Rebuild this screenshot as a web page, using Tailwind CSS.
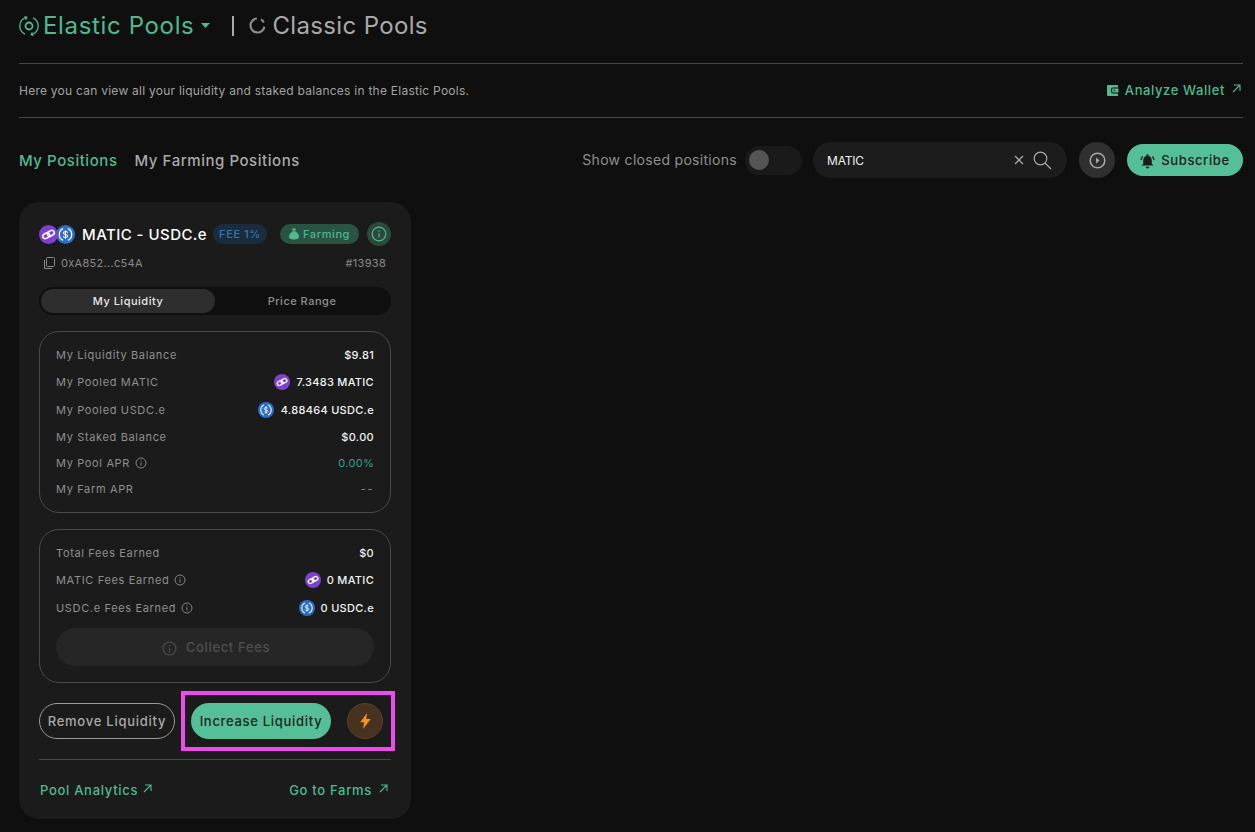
<!DOCTYPE html>
<html lang="en">
<head>
    <meta charset="UTF-8">
    <meta name="viewport" content="width=device-width, initial-scale=1.0">
    <title>Elastic Pools</title>
    <script src="https://cdn.jsdelivr.net/npm/@tailwindcss/browser@4"></script>
</head>
<body class="bg-[#0f0f0f] h-[832px] overflow-hidden font-['Inter',sans-serif] text-[#a9a9a9]">
    <div class="pl-[19px] pr-3">
        <!-- Pool type switch -->
        <div class="h-[63px] pb-[12px] flex items-center">
            <svg class="w-5 h-5 text-[#50b98f]" viewBox="0 0 20 20" fill="none" stroke="currentColor" stroke-width="1.300">
                <path d="M6 18.200A9 9 0 0 1 7.400 1.400M14 1.800A9 9 0 0 1 12.600 18.600"/>
                <path d="M5.400.5l2.400.9-1.200 2.300M14.600 19.500l-2.400-.9 1.200-2.300"/>
                <circle cx="10" cy="10" r="3.500" stroke-width="1.800"/>
            </svg>
            <span class="ml-[4px] text-[24px] leading-none font-normal tracking-[0.65px] text-[#50b98f]">Elastic Pools</span>
            <svg class="ml-[7px] w-[9px] h-[5px] text-[#50b98f]" viewBox="0 0 9 5" fill="currentColor"><path d="M0 0h9L4.500 5z"/></svg>
            <span class="ml-[22px] w-[2px] h-[20px] bg-[#a9a9a9]"></span>
            <svg class="ml-[15px] w-[17px] h-[17px] text-[#8c8c8c]" viewBox="0 0 17 17" fill="none" stroke="currentColor" stroke-width="2.200"><path d="M15.400 9.700A7 7 0 1 1 7.900 1.500M12 2.400A7 7 0 0 1 14.800 5.500"/></svg>
            <span class="ml-[6px] text-[24px] leading-none font-normal tracking-[0.35px] text-[#a9a9a9]">Classic Pools</span>
        </div>

        <!-- Intro line -->
        <div class="h-[55px] border-y border-[#474747] flex items-center justify-between">
            <span class="text-[12px] tracking-[0.25px] text-[#a3a3a3]">Here you can view all your liquidity and staked balances in the Elastic Pools.</span>
            <a class="flex items-center text-[13px] font-medium tracking-[0.6px] text-[#50b98f] mr-[2px]">
                <svg class="w-[13px] h-[13px] mr-[6px]" viewBox="0 0 13 13" fill="currentColor"><path fill-rule="evenodd" d="M2 1h10v2.500H7a2 2 0 0 0-2 2v2a2 2 0 0 0 2 2h5V12H2a1 1 0 0 1-1-1V2a1 1 0 0 1 1-1zm5 3.500h5.500v4H7a1 1 0 0 1-1-1v-2a1 1 0 0 1 1-1zm1.200 1.200a.8.8 0 1 0 0 1.600.8.8 0 0 0 0-1.600z"/></svg>
                Analyze Wallet
                <svg class="w-[9px] h-[9px] ml-[7px] mb-[5px]" viewBox="0 0 9 9" fill="none" stroke="currentColor" stroke-width="1.100"><path d="M1 8L8 1M2 1h6v6"/></svg>
            </a>
        </div>

        <!-- Tabs and filters -->
        <div class="mt-[23px] h-[38px] flex items-center justify-between">
            <div class="flex items-center gap-[17px] pt-[2px] text-[15px] font-medium tracking-[0.55px]">
                <span class="text-[#50b98f]">My Positions</span>
                <span class="text-[#a9a9a9]">My Farming Positions</span>
            </div>
            <div class="flex items-center">
                <span class="pb-[2px] text-[14px] tracking-[0.3px] text-[#8f8f8f]">Show closed positions</span>
                <div class="ml-2 w-[57px] h-[29px] rounded-full bg-[#1a1a1a] flex items-center pl-[4px]">
                    <span class="w-[20px] h-[20px] rounded-full bg-[#555555]"></span>
                </div>
                <div class="ml-[11px] w-[254px] h-[36px] rounded-full bg-[#1c1c1c] flex items-center pl-[14px] pr-[15px]">
                    <span class="pt-[2px] text-[12px] tracking-[-0.2px] text-[#f0f0f0]">MATIC</span>
                    <svg class="ml-auto w-[10px] h-[10px] text-[#a9a9a9]" viewBox="0 0 10 10" stroke="currentColor" stroke-width="1.300"><path d="M1 1l8 8M9 1L1 9"/></svg>
                    <svg class="ml-[9px] w-[19px] h-[19px] text-[#a9a9a9]" viewBox="0 0 19 19" fill="none" stroke="currentColor" stroke-width="1.200"><circle cx="7.500" cy="7.500" r="6.300"/><path d="M12 12l6 6"/></svg>
                </div>
                <div class="ml-[12px] w-[36px] h-[36px] rounded-full bg-[#303030] flex items-center justify-center">
                    <svg class="w-[17px] h-[17px] text-[#a9a9a9]" viewBox="0 0 17 17" fill="none" stroke="currentColor" stroke-width="1.500"><circle cx="8.500" cy="8.500" r="7.300"/><path d="M7 5.500l3.500 3-3.500 3z" fill="currentColor" stroke="none"/></svg>
                </div>
                <button class="ml-[12px] w-[116px] h-[32px] pt-[2px] rounded-full bg-[#55bf97] flex items-center justify-center text-[13px] font-medium tracking-[0.6px] text-[#1c1c1c]">
                    <svg class="w-[15px] h-[15px] mr-[6px]" viewBox="0 0 14 14" fill="currentColor"><path d="M7 .2c.6 0 1 .4 1 1v.6c1.900.5 3 2 3 4.200v3l1.600 1.800H1.400L3 9V6c0-2.200 1.100-3.700 3-4.200v-.6c0-.6.400-1 1-1zM5.300 11.800h3.400a1.700 1.700 0 0 1-3.400 0z"/><path d="M.8 5.500L2.300 2.200M13.200 5.500L11.700 2.200" stroke="currentColor" stroke-width="1.200" fill="none"/></svg>
                    Subscribe
                </button>
            </div>
        </div>

        <!-- Position card -->
        <div class="mt-[23px] w-[392px] h-[617px] rounded-[20px] bg-[#1b1b1b] px-[20px] pt-[20px]">
            <div class="h-[24px] flex items-center">
                <div class="flex items-center">
                    <svg class="w-[19px] h-[19px] relative z-10" viewBox="0 0 20 20"><circle cx="10" cy="10" r="10" fill="#7f3fd0"/><g fill="none" stroke="#fff" stroke-width="1.700" transform="rotate(-28 10 10)"><rect x="3.500" y="7.500" width="7.500" height="5" rx="2.500"/><rect x="9" y="7.500" width="7.500" height="5" rx="2.500"/></g></svg>
                    <svg class="w-[19px] h-[19px] -ml-[2px]" viewBox="0 0 20 20"><circle cx="10" cy="10" r="10" fill="#2c6dc9"/><path d="M7.500 3.800A6.800 6.800 0 0 0 7.500 16.200M12.500 3.800A6.800 6.800 0 0 1 12.500 16.200" fill="none" stroke="#fff" stroke-width="1.300"/><path d="M12.200 8c-.3-.8-1.100-1.200-2.200-1.200-1.300 0-2.200.6-2.200 1.600 0 2.200 4.500 1 4.500 3.200 0 1-1 1.600-2.300 1.600-1.200 0-2-.5-2.300-1.300M10 5.500v9" fill="none" stroke="#fff" stroke-width="1.100"/></svg>
                </div>
                <span class="ml-[7px] w-[126px] pt-[2px] text-[15px] font-medium tracking-[0.45px] text-white whitespace-nowrap">MATIC - USDC.e</span>
                <span class="ml-[5px] w-[54px] h-[20px] rounded-full bg-[#1b2c3c] flex items-center justify-center text-[11px] font-medium tracking-[0.6px] text-[#2f78b8] whitespace-nowrap">FEE 1%</span>
                <span class="ml-[13px] w-[79px] h-[20px] rounded-full bg-[#2a5442] flex items-center justify-center text-[11px] font-medium tracking-[0.6px] text-[#52b78f]">
                    <svg class="w-[10px] h-[12px] mr-[4px]" viewBox="0 0 10 11" fill="currentColor"><path d="M3 0h4L6.200 2.200H3.800zM3.500 2.800h3C8.500 4.300 10 6 10 8c0 2-1.500 3-5 3S0 10 0 8c0-2 1.500-3.700 3.500-5.200z"/></svg>
                    Farming
                </span>
                <span class="ml-[8px] w-[24px] h-[24px] rounded-full bg-[#2a4a3c] flex items-center justify-center">
                    <svg class="w-[16px] h-[16px] text-[#52b78f]" viewBox="0 0 16 16" fill="none" stroke="currentColor" stroke-width="1.200"><circle cx="8" cy="8" r="6.800"/><path d="M8 7.300v4M8 4.500v1.300"/></svg>
                </span>
            </div>

            <div class="mt-[9px] h-[16px] flex items-center justify-between pl-[5px] pr-[5px] text-[11px] tracking-[0.3px] text-[#8a8a8a]">
                <span class="flex items-center gap-[6px]">
                    <svg class="w-[11px] h-[12px]" viewBox="0 0 11 12" fill="none" stroke="currentColor" stroke-width="1"><path d="M.5 3v8.500H8"/><rect x="2.500" y=".5" width="8" height="9" rx="1"/></svg>
                    0xA852...c54A
                </span>
                <span>#13938</span>
            </div>

            <!-- Liquidity / range toggle -->
            <div class="mt-[16px] h-[28px] rounded-full bg-[#0f0f0f] flex items-center p-[2px] text-[11px] font-medium tracking-[0.5px]">
                <span class="w-[174px] h-[24px] rounded-full bg-[#2e2e2e] flex items-center justify-center text-[#e6e6e6]">My Liquidity</span>
                <span class="flex-1 flex items-center justify-center text-[#8f8f8f]">Price Range</span>
            </div>

            <!-- Balances -->
            <div class="mt-[16px] h-[182px] rounded-[20px] border border-[#4a4a4a] px-[16px] pt-[10px] text-[11px] tracking-[0.65px] text-[#8f8f8f]">
                <div class="h-[26px] flex items-center justify-between"><span>My Liquidity Balance</span><span class="font-medium tracking-[0.3px] text-[#f2f2f2]">$9.81</span></div>
                <div class="h-[28px] flex items-center justify-between">
                    <span>My Pooled MATIC</span>
                    <span class="flex items-center font-medium tracking-[0.3px] text-[#f2f2f2]">
                        <svg class="w-4 h-4 mr-[6px]" viewBox="0 0 20 20"><circle cx="10" cy="10" r="10" fill="#7f3fd0"/><g fill="none" stroke="#fff" stroke-width="1.700" transform="rotate(-28 10 10)"><rect x="3.500" y="7.500" width="7.500" height="5" rx="2.500"/><rect x="9" y="7.500" width="7.500" height="5" rx="2.500"/></g></svg>
                        7.3483 MATIC
                    </span>
                </div>
                <div class="h-[28px] flex items-center justify-between">
                    <span>My Pooled USDC.e</span>
                    <span class="flex items-center font-medium tracking-[0.3px] text-[#f2f2f2]">
                        <svg class="w-4 h-4 mr-[7px]" viewBox="0 0 20 20"><circle cx="10" cy="10" r="10" fill="#2c6dc9"/><path d="M7.500 3.800A6.800 6.800 0 0 0 7.500 16.200M12.500 3.800A6.800 6.800 0 0 1 12.500 16.200" fill="none" stroke="#fff" stroke-width="1.300"/><path d="M12.200 8c-.3-.8-1.100-1.200-2.200-1.200-1.300 0-2.200.6-2.200 1.600 0 2.200 4.500 1 4.500 3.200 0 1-1 1.600-2.300 1.600-1.200 0-2-.5-2.300-1.300M10 5.500v9" fill="none" stroke="#fff" stroke-width="1.100"/></svg>
                        4.88464 USDC.e
                    </span>
                </div>
                <div class="h-[26px] flex items-center justify-between"><span>My Staked Balance</span><span class="font-medium tracking-[0.3px] text-[#f2f2f2]">$0.00</span></div>
                <div class="h-[26px] flex items-center justify-between">
                    <span class="flex items-center gap-[5px]">My Pool APR
                        <svg class="w-[12px] h-[12px]" viewBox="0 0 12 12" fill="none" stroke="currentColor" stroke-width=".9"><circle cx="6" cy="6" r="5"/><path d="M6 5.400v3.200M6 3.300v1"/></svg>
                    </span>
                    <span class="tracking-[0.3px] text-[#39a08d]">0.00%</span>
                </div>
                <div class="h-[26px] flex items-center justify-between"><span>My Farm APR</span><span class="tracking-[1.500px] font-medium text-[#39a08d]">--</span></div>
            </div>

            <!-- Fees -->
            <div class="mt-[16px] h-[154px] rounded-[20px] border border-[#4a4a4a] px-[16px] pt-[10px] text-[11px] tracking-[0.65px] text-[#8f8f8f]">
                <div class="h-[26px] flex items-center justify-between"><span>Total Fees Earned</span><span class="font-medium tracking-[0.3px] text-[#f2f2f2]">$0</span></div>
                <div class="h-[28px] flex items-center justify-between">
                    <span class="flex items-center gap-[5px]">MATIC Fees Earned
                        <svg class="w-[12px] h-[12px]" viewBox="0 0 12 12" fill="none" stroke="currentColor" stroke-width=".9"><circle cx="6" cy="6" r="5"/><path d="M6 5.400v3.200M6 3.300v1"/></svg>
                    </span>
                    <span class="flex items-center font-medium tracking-[0.3px] text-[#f2f2f2]">
                        <svg class="w-4 h-4 mr-[6px]" viewBox="0 0 20 20"><circle cx="10" cy="10" r="10" fill="#7f3fd0"/><g fill="none" stroke="#fff" stroke-width="1.700" transform="rotate(-28 10 10)"><rect x="3.500" y="7.500" width="7.500" height="5" rx="2.500"/><rect x="9" y="7.500" width="7.500" height="5" rx="2.500"/></g></svg>
                        0 MATIC
                    </span>
                </div>
                <div class="h-[28px] flex items-center justify-between">
                    <span class="flex items-center gap-[5px]">USDC.e Fees Earned
                        <svg class="w-[12px] h-[12px]" viewBox="0 0 12 12" fill="none" stroke="currentColor" stroke-width=".9"><circle cx="6" cy="6" r="5"/><path d="M6 5.400v3.200M6 3.300v1"/></svg>
                    </span>
                    <span class="flex items-center font-medium tracking-[0.3px] text-[#f2f2f2]">
                        <svg class="w-4 h-4 mr-[6px]" viewBox="0 0 20 20"><circle cx="10" cy="10" r="10" fill="#2c6dc9"/><path d="M7.500 3.800A6.800 6.800 0 0 0 7.500 16.200M12.500 3.800A6.800 6.800 0 0 1 12.500 16.200" fill="none" stroke="#fff" stroke-width="1.300"/><path d="M12.200 8c-.3-.8-1.100-1.200-2.200-1.200-1.300 0-2.200.6-2.200 1.600 0 2.200 4.500 1 4.500 3.200 0 1-1 1.600-2.300 1.600-1.200 0-2-.5-2.300-1.300M10 5.500v9" fill="none" stroke="#fff" stroke-width="1.100"/></svg>
                        0 USDC.e
                    </span>
                </div>
                <button class="mt-[6px] w-full h-[38px] pt-[2px] pl-[2px] rounded-full bg-[#262626] flex items-center justify-center text-[13px] font-medium tracking-[0.65px] text-[#4f4f4f]">
                    <svg class="w-[15px] h-[15px] mr-[9px]" viewBox="0 0 15 15" fill="none" stroke="currentColor" stroke-width="1.100"><circle cx="7.500" cy="7.500" r="6.500"/><path d="M7.500 6.700v4.200M7.500 4v1.300"/></svg>
                    Collect Fees
                </button>
            </div>

            <!-- Actions -->
            <div class="relative mt-[20px] h-[36px] flex items-center">
                <button class="w-[136px] h-[36px] pt-[2px] rounded-full border border-[#9a9a9a] text-[13px] font-medium tracking-[0.75px] text-[#a9a9a9] whitespace-nowrap">Remove Liquidity</button>
                <button class="ml-[16px] w-[140px] h-[36px] pt-[2px] rounded-full bg-[#55bf97] text-[13px] font-medium tracking-[0.7px] text-[#1f1f1f] whitespace-nowrap">Increase Liquidity</button>
                <span class="ml-[16px] w-[36px] h-[36px] rounded-full bg-[#46331f] border border-[#5c4224] flex items-center justify-center">
                    <svg class="w-[11px] h-[16px] text-[#f7931e]" viewBox="0 0 11 16" fill="currentColor"><path d="M7 0L.3 9.200h3.900L3 16l7.700-10H6.300z"/></svg>
                </span>
                <!-- highlight marker over the two buttons -->
                <div class="absolute left-[142px] -top-[12px] w-[214px] h-[60px] border-4 border-[#ee4bee] pointer-events-none"></div>
            </div>

            <div class="mt-[20px] border-t border-[#474747]"></div>

            <div class="mt-[21px] flex items-center justify-between pl-[1px] pr-[3px] text-[13px] font-medium tracking-[0.7px] text-[#50b98f]">
                <a class="flex items-center">Pool Analytics
                    <svg class="w-[9px] h-[9px] ml-[5px] mb-[5px]" viewBox="0 0 9 9" fill="none" stroke="currentColor" stroke-width="1.100"><path d="M1 8L8 1M2 1h6v6"/></svg>
                </a>
                <a class="flex items-center">Go to Farms
                    <svg class="w-[9px] h-[9px] ml-[7px] mb-[5px]" viewBox="0 0 9 9" fill="none" stroke="currentColor" stroke-width="1.100"><path d="M1 8L8 1M2 1h6v6"/></svg>
                </a>
            </div>
        </div>
    </div>
</body>
</html>
